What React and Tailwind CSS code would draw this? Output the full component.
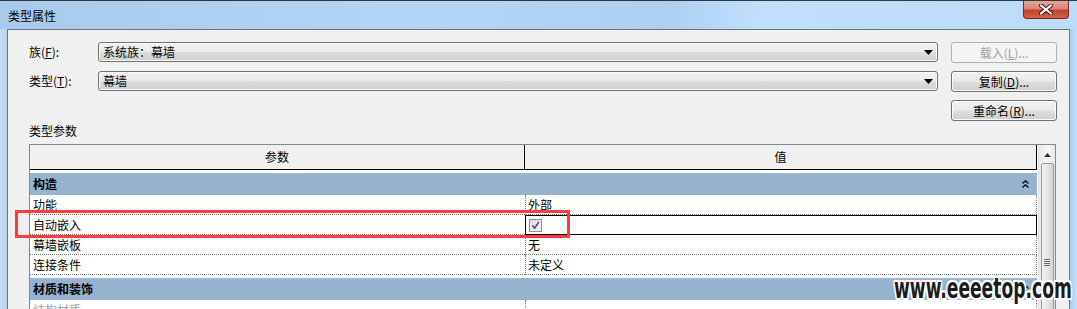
import React from 'react';

const Combo = ({ value }) => (
  <div className="flex h-[20px] w-[840px] items-center rounded-[3px] border border-[#707070] bg-[linear-gradient(#f2f2f2_0%,#ebebeb_48%,#dddddd_52%,#cfcfcf_100%)] pl-[4px] shadow-[inset_0_0_0_1px_#fbfbfb]">
    <span className="leading-[14px]">{value}</span>
    <svg className="ml-auto mr-[4px]" width="9" height="5" viewBox="0 0 9 5">
      <path d="M0 0h9L4.5 5z" fill="#000" />
    </svg>
  </div>
);

const Button = ({ children, disabled }) =>
  disabled ? (
    <div className="flex h-[21px] w-[106px] items-center justify-center rounded-[3px] border border-[#adb2b5] bg-[#f4f4f4] text-[#a0a0a0]">
      {children}
    </div>
  ) : (
    <div className="flex h-[21px] w-[106px] items-center justify-center rounded-[3px] border border-[#707070] bg-[linear-gradient(#f2f2f2_0%,#ebebeb_48%,#dddddd_52%,#cfcfcf_100%)] shadow-[inset_0_0_0_1px_#fbfbfb]">
      {children}
    </div>
  );

const GroupRow = ({ label }) => (
  <div className="mt-[3px] flex h-[22px] w-[1007px] items-center bg-[#98b3d0] pl-[3px] font-bold">
    <span className="leading-[14px]">{label}</span>
    <svg className="ml-auto mr-[8px]" width="7" height="8" viewBox="0 0 7 8">
      <path d="M0.5 3.5L3.5 0.8L6.5 3.5M0.5 7.5L3.5 4.8L6.5 7.5" fill="none" stroke="#000" strokeWidth="1.3" />
    </svg>
  </div>
);

const Row = ({ label, value, muted }) => (
  <div className="flex h-[20px] w-[1007px]">
    <div className={`flex w-[495px] items-center border-b border-dotted border-[#7a7a7a] pl-[3px] ${muted ? 'text-[#a3a3a3]' : ''}`}>
      <span className="leading-[14px]">{label}</span>
    </div>
    <div className="flex w-[512px] items-center border-b border-l border-r border-dotted border-[#7a7a7a] pl-[2px]">
      <span className="leading-[14px]">{value}</span>
    </div>
  </div>
);

const CheckRow = ({ label }) => (
  <div className="flex h-[20px] w-[1007px]">
    <div className="flex w-[495px] items-center border-b border-dotted border-[#7a7a7a] pl-[3px]">
      <span className="leading-[14px]">{label}</span>
    </div>
    <div className="flex w-[512px] items-center border border-black pl-[3px]">
      <div className="flex h-[13px] w-[13px] items-center justify-center border border-[#8e8f8f] bg-[linear-gradient(135deg,#dcdcdc,#f6f6f6)]">
        <svg width="9" height="9" viewBox="0 0 9 9">
          <path d="M1.5 4.5L3.6 7.2L7.8 1" fill="none" stroke="#3d4e8c" strokeWidth="1.6" />
        </svg>
      </div>
    </div>
  </div>
);

export default function App() {
  return (
    <div className="relative h-[309px] w-[1077px] overflow-hidden bg-[#bcd8f3] font-['Noto_Sans_CJK_SC','Microsoft_YaHei',sans-serif] text-[12px] text-black">
      {/* title bar */}
      <div className="flex h-[29px] border-t border-[#30363d] bg-[linear-gradient(100deg,#a9caec_0%,#b4d5f6_40%,#aecff0_62%,#bfdffc_70%,#bddcfa_100%)]">
        <span className="pl-[8px] pt-[8px] leading-[14px]">类型属性</span>
        <div className="ml-auto mr-[8px] flex h-[18px] w-[46px] items-center justify-center rounded-b-[4px] border border-t-0 border-[#6e2a23] bg-[linear-gradient(#e6a596_0%,#d98676_45%,#c5412c_55%,#d4604a_100%)]">
          <svg width="14" height="11" viewBox="0 0 14 11">
            <path d="M2 1.5L12 9.5M12 1.5L2 9.5" stroke="#3b1410" strokeWidth="4" strokeLinecap="square" />
            <path d="M2 1.5L12 9.5M12 1.5L2 9.5" stroke="#fff" strokeWidth="2" strokeLinecap="square" />
          </svg>
        </div>
      </div>

      <div className="flex h-[280px]">
        <div className="w-[7px] bg-[linear-gradient(90deg,#c7ddf3,#b7d3f0)]" />
        <div className="w-[1063px] border-l border-r border-t border-[#6b7580] bg-[#f0f0f0] pl-[21px] pt-[12px]">
          <div className="grid grid-cols-[69px_853px_106px] gap-y-[8px]">
            <div className="flex h-[20px] items-center">
              <span className="leading-[14px]">族(<u>F</u>):</span>
            </div>
            <Combo value="系统族：幕墙" />
            <Button disabled>载入(<u>L</u>)...</Button>

            <div className="flex h-[20px] items-center">
              <span className="leading-[14px]">类型(<u>T</u>):</span>
            </div>
            <Combo value="幕墙" />
            <Button>复制(<u>D</u>)...</Button>

            <div className="col-start-3">
              <Button>重命名(<u>R</u>)...</Button>
            </div>
          </div>

          <div className="mt-[2px] leading-[16px]">类型参数</div>

          {/* parameter table */}
          <div className="mt-[5px] flex w-[1027px] border-l border-r border-t border-[#828790] bg-white">
            <div className="w-[1008px]">
              <div className="flex h-[25px] w-[1007px] border-b border-r border-black bg-[#f0f0f0]">
                <div className="flex w-[494px] items-center justify-center">参数</div>
                <div className="flex flex-1 items-center justify-center border-l border-black">值</div>
              </div>
              <GroupRow label="构造" />
              <Row label="功能" value="外部" />
              <CheckRow label="自动嵌入" />
              <Row label="幕墙嵌板" value="无" />
              <Row label="连接条件" value="未定义" />
              <GroupRow label="材质和装饰" />
              <Row label="结构材质" value="" muted />
            </div>

            {/* scrollbar */}
            <div className="flex w-[17px] flex-col items-center border-l border-[#e3e3e3] bg-[linear-gradient(90deg,#e8e8e8,#f5f5f5_40%,#f5f5f5_60%,#e8e8e8)]">
              <div className="flex h-[17px] items-center justify-center pt-[3px]">
                <svg width="7" height="4" viewBox="0 0 7 4">
                  <path d="M0 4L3.5 0L7 4z" fill="#333" />
                </svg>
              </div>
              <div className="mt-[1px] flex h-[160px] w-[13px] flex-col items-center rounded-t-[2px] border border-[#979797] bg-[linear-gradient(90deg,#f2f2f2,#e6e6e6_50%,#d4d4d4)] pt-[95px]">
                <div className="h-[1px] w-[6px] bg-[#6b6b6b]" />
                <div className="mt-[1px] h-[1px] w-[6px] bg-[#6b6b6b]" />
                <div className="mt-[1px] h-[1px] w-[6px] bg-[#6b6b6b]" />
                <div className="mt-[1px] h-[1px] w-[6px] bg-[#6b6b6b]" />
              </div>
            </div>
          </div>
        </div>
        <div className="w-[7px] bg-[linear-gradient(90deg,#a9cdf0,#c4e0fb)]" />
      </div>

      {/* annotation */}
      <div className="absolute left-[15px] top-[210px] h-[28px] w-[555px] border-[3px] border-[#ff3b3b]" />

      {/* watermark */}
      <div className="absolute left-[894px] top-[273px] origin-left scale-x-[0.68] whitespace-nowrap font-['Liberation_Sans_Narrow','DejaVu_Sans_Condensed',sans-serif] text-[28px] font-bold leading-[32px] text-[#1c1c1c] [text-shadow:-2px_-2px_0_#fff,2px_-2px_0_#fff,-2px_2px_0_#fff,2px_2px_0_#fff,0_2px_0_#fff,0_-2px_0_#fff,2px_0_0_#fff,-2px_0_0_#fff]">
        www.eeeetop.com
      </div>
    </div>
  );
}
